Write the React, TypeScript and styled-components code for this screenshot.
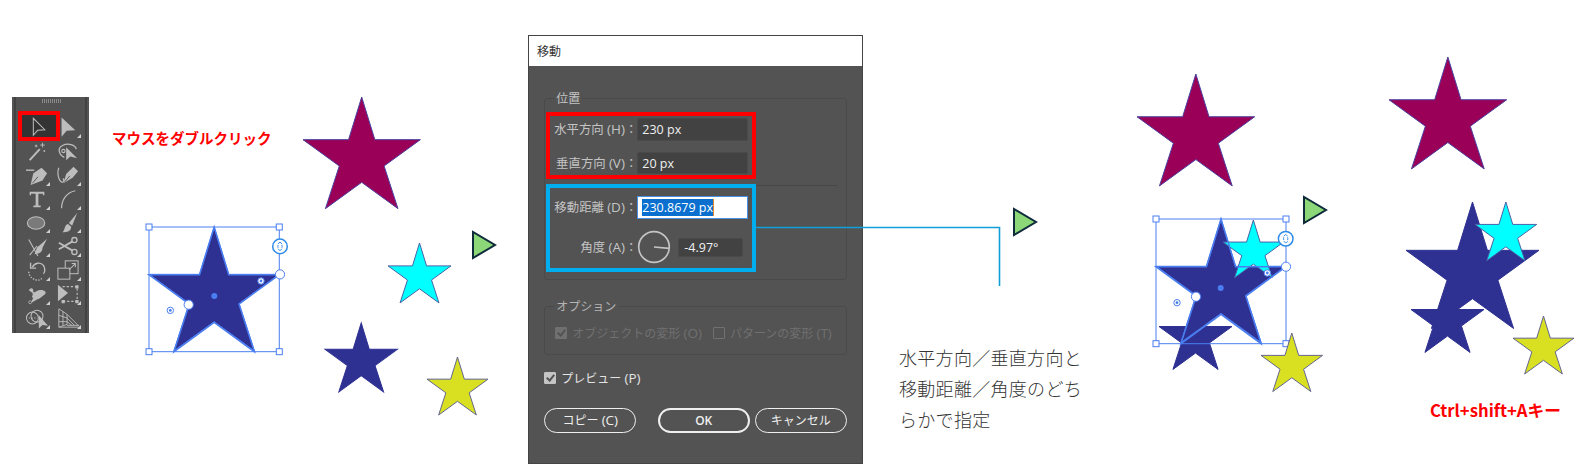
import React from "react";
import styled, { createGlobalStyle } from "styled-components";

const STAR_POINTS = [
    [50, 0], [61.2, 36.33], [100, 36.33], [69.1, 58.8], [80.9, 95.1],
    [50, 72.7], [19.1, 95.1], [30.9, 58.8], [0, 36.33], [38.8, 36.33],
];

const colors = {
    magenta: { fill: "#9b0058", line: "#4b3f9e" },
    cyan: { fill: "#00ffff", line: "#4a62a8" },
    navy: { fill: "#2e3192", line: "#2e3192" },
    yellow: { fill: "#d9e021", line: "#62658f" },
};

type StarProps = { x: number; y: number; w: number; kind: keyof typeof colors; line?: string };

const Star = ({ x, y, w, kind, line }: StarProps) => (
    <StarSvg $x={x} $y={y} $w={w} viewBox="0 0 100 95.1">
        <polygon
            points={STAR_POINTS.map((p) => p.join(",")).join(" ")}
            fill={colors[kind].fill}
            stroke={line || colors[kind].line}
            strokeWidth={1}
            vectorEffect="non-scaling-stroke"
        />
    </StarSvg>
);

const Play = ({ x, y }: { x: number; y: number }) => (
    <PlaySvg $x={x} $y={y} viewBox="0 0 26 30">
        <polygon points="2,2 2,28 24,15" fill="#8cd878" stroke="#0f2a3a" strokeWidth={2} />
    </PlaySvg>
);

type Pt = [number, number];
type SelectionProps = { x: number; y: number; w: number; h: number; left: Pt; right: Pt; rotate: Pt; center: Pt; t1: Pt; t2: Pt };

const Selection = ({ x, y, w, h, left, right, rotate, center, t1, t2 }: SelectionProps) => {
    const outline = STAR_POINTS.map(([a, b]) => `${(a / 100) * w},${(b / 95.1) * h}`).join(" ");
    const blue = "#4a7ef0";
    const corners: Pt[] = [[0, 0], [w, 0], [0, h], [w, h]];
    return (
        <SelectionSvg $x={x} $y={y} width={w} height={h} viewBox={`0 0 ${w} ${h}`}>
            <polygon points={outline} fill="none" stroke={blue} strokeWidth={1.5} />
            <rect x={0} y={0} width={w} height={h} fill="none" stroke={blue} strokeWidth={1} />
            {corners.map(([a, b], i) => (
                <rect key={i} x={a - 3} y={b - 3} width={6} height={6} fill="#fff" stroke={blue} strokeWidth={1} />
            ))}
            <circle cx={center[0]} cy={center[1]} r={3} fill={blue} />
            {[t1, t2].map(([a, b], i) => (
                <g key={i}>
                    <circle cx={a} cy={b} r={3.2} fill="#fff" stroke={blue} strokeWidth={1} />
                    <circle cx={a} cy={b} r={1.4} fill={blue} />
                </g>
            ))}
            {[left, right].map(([a, b], i) => (
                <circle key={i} cx={a} cy={b} r={4.6} fill="#fff" stroke={blue} strokeWidth={1} />
            ))}
            <g transform={`translate(${rotate[0]} ${rotate[1]})`}>
                <circle r={7.3} fill="#fff" stroke="#2f8be8" strokeWidth={1.5} />
                <path d="M-2 -2.4 L0 -4.4 L2 -2.4 M-2 2.4 L0 4.4 L2 2.4 M-1.8 -1.4 A2.6 2.6 0 0 0 -1.8 1.4 M1.8 -1.4 A2.6 2.6 0 0 1 1.8 1.4" fill="none" stroke="#2f8be8" strokeWidth={1} />
            </g>
        </SelectionSvg>
    );
};

const tools: { icon: React.ReactNode; corner: boolean; active?: boolean }[] = [
    { corner: false, active: true, icon: <path d="M8 2.5 V21 L12.6 15.6 L20.5 15 Z" fill="none" stroke="#bdbdbd" strokeWidth={1.1} /> },
    { corner: true, icon: <path d="M5 1.5 V22.5 L10.5 16 L20 15.5 Z" fill="#bdbdbd" /> },
    { corner: false, icon: <g stroke="#bdbdbd" fill="none"><path d="M4 22 L15 10" strokeWidth={2.2} /><path d="M18 3 V8 M15.5 5.5 H20.5 M11 5 V8 M9.5 6.5 H12.5 M20 11 V13 M19 12 H21" strokeWidth={1} /></g> },
    { corner: false, icon: <g fill="none" stroke="#bdbdbd"><path d="M8 19 C2 16 0 9 6 6 C12 3 20 5 21 10" strokeWidth={1.4} /><circle cx="7" cy="12" r="1.8" strokeWidth={1.2} /><path d="M10 8 V22 L14.5 18 L22 20 Z" fill="#bdbdbd" stroke="none" /></g> },
    { corner: true, icon: <g fill="#bdbdbd"><path d="M0 6 H9 V7.5 H0 Z" /><path d="M8 10 L17 4 L23 10 L18 18 L5 23 Z" /><path d="M7 21 L13 14" stroke="#535353" strokeWidth={1} /></g> },
    { corner: true, icon: <g><path d="M2 4 C-1 12 4 23 7 19 C9 16 5 15 8 18" fill="none" stroke="#bdbdbd" strokeWidth={1.3} /><path d="M10 11 L18 3 L23 8 L17 15 L7 21 Z" fill="#bdbdbd" /><path d="M8 20 L14 13" stroke="#535353" strokeWidth={1} /></g> },
    { corner: true, icon: <path d="M4 4 H20 V8 H18.5 V6.2 H13.5 V19 H16 V21 H8 V19 H10.5 V6.2 H5.5 V8 H4 Z" fill="#bdbdbd" /> },
    { corner: true, icon: <path d="M5 22 C5 13 10 5 20 3" fill="none" stroke="#bdbdbd" strokeWidth={1.3} /> },
    { corner: true, icon: <ellipse cx="11" cy="12" rx="9.5" ry="6.8" fill="#7a7a7a" stroke="#bdbdbd" strokeWidth={1.2} /> },
    { corner: true, icon: <g fill="#bdbdbd"><path d="M22 1 L13 12 L16.5 15 Z" /><path d="M12 13 C8 14 9 19 6 22 C11 22 15.5 21 15.5 16 Z" /></g> },
    { corner: true, icon: <g><path d="M3 5 L13 23 M4 22 L12 12" fill="none" stroke="#bdbdbd" strokeWidth={1.2} /><path d="M23 4 L14 12 C10 14 12 18 9 21 C14 21 18 19 18 14 Z" fill="#bdbdbd" /></g> },
    { corner: true, icon: <g fill="none" stroke="#bdbdbd" strokeWidth={1.5}><circle cx="19" cy="5.5" r="2.8" /><circle cx="19" cy="18.5" r="2.8" /><path d="M17 7 L2 15.5 M17 17 L2 8.5" strokeWidth={2} /></g> },
    { corner: true, icon: <g fill="none" stroke="#bdbdbd" strokeWidth={1.5}><path d="M7 9 C9 4 16 3 19 7 C21 10 21 14 19 16" /><path d="M5 4 V10 H11" /><path d="M3 14 C3 19 8 23 13 23 C15 23 17 22 18 20" strokeDasharray="1.5 1.5" /></g> },
    { corner: true, icon: <g fill="none" stroke="#bdbdbd" strokeWidth={1.1}><rect x="9" y="2" width="14" height="14" /><rect x="1" y="10" width="13" height="12" fill="#535353" /><path d="M13 12 L20 5 M16 5 H20 V9" /></g> },
    { corner: true, icon: <g fill="#bdbdbd"><path d="M3 8 C6 4 8 6 8 9 C8 12 11 9 14 8 C18 7 23 9 21 12 C18 14 16 17 12 18 L5 22 L8 16 C4 16 10 12 6 10 Z" /><circle cx="4.5" cy="21" r="1.6" fill="#535353" stroke="#bdbdbd" strokeWidth={0.8} /></g> },
    { corner: true, icon: <g><path d="M1 2 V20 L12 11 Z" fill="#bdbdbd" /><path d="M6 4 H22 V20 H6" fill="none" stroke="#bdbdbd" strokeWidth={1.2} strokeDasharray="2.5 2" /><path d="M20 2.5 H23.5 V6 H20 Z M20 18.5 H23.5 V22 H20 Z M5 18.5 H8.5 V22 H5 Z" fill="#bdbdbd" /></g> },
    { corner: true, icon: <g><circle cx="7" cy="12" r="6.5" fill="none" stroke="#bdbdbd" strokeWidth={1.1} /><circle cx="12" cy="10" r="6.5" fill="none" stroke="#bdbdbd" strokeWidth={1.1} /><path d="M3 12 H11" stroke="#bdbdbd" strokeWidth={1} strokeDasharray="1.5 1.5" /><path d="M14 9 V23.5 L18 19.5 L24 20.5 Z" fill="#bdbdbd" /></g> },
    { corner: true, icon: <g fill="none" stroke="#bdbdbd" strokeWidth={1}><path d="M2 2 V22 L11 19 V8 Z M2 9 L11 12 M2 16 L11 16 M6.5 5 V20" /><path d="M11 8 L24 21 M11 12 L19 20 M11 16 L16 20 M11 20 H24 M2 22 H24" /></g> },
];

export default function App() {
    return (
        <>
            <GlobalStyle/>
            <Canvas>
                <Toolbar>
                    <ToolbarInner>
                        <Grip/>
                        <ToolGrid>
                            {tools.map((t, i) => (
                                <ToolCell key={i} $active={t.active} $corner={t.corner}>
                                    <ToolIcon viewBox="0 0 24 24">{t.icon}</ToolIcon>
                                </ToolCell>
                            ))}
                        </ToolGrid>
                    </ToolbarInner>
                </Toolbar>

                <RedNote $x={112} $y={127} $size={14.5}>マウスをダブルクリック</RedNote>

                <Star x={149} y={227.3} w={130.3} kind="navy" line="#4a7ef0"/>
                <Selection x={149} y={227.3} w={130.3} h={124.7} left={[39.7, 77.7]} right={[131, 47.4]} rotate={[131, 19.4]} center={[65.3, 69]} t1={[112, 54]} t2={[21.3, 83.4]}/>
                <Star x={303.3} y={97.3} w={117.4} kind="magenta"/>
                <Star x={387.7} y={242.7} w={63} kind="cyan"/>
                <Star x={325.3} y={323.3} w={72.4} kind="navy"/>
                <Star x={427} y={356.7} w={61} kind="yellow"/>
                <Play x={470.5} y={229.5}/>

                <Dialog>
                    <TitleBar>移動</TitleBar>
                    <DialogBody>
                        <Group $top={13} $bottom={6.6}>
                            <GroupLegend>位置</GroupLegend>
                            <HighlightBox $color="#ff0000" $pad="2px 0 1px">
                                <FieldRow>
                                    <FieldLabel>水平方向 <Key>(H)</Key>：</FieldLabel>
                                    <ValueBox>230 px</ValueBox>
                                </FieldRow>
                                <FieldRow>
                                    <FieldLabel>垂直方向 <Key>(V)</Key>：</FieldLabel>
                                    <ValueBox>20 px</ValueBox>
                                </FieldRow>
                            </HighlightBox>
                            <BlueRow>
                                <HighlightBox $color="#00aeef" $pad="8px 0 3.7px">
                                    <FieldRow>
                                        <FieldLabel>移動距離 <Key>(D)</Key>：</FieldLabel>
                                        <SelectedBox><Selected>230.8679 px</Selected></SelectedBox>
                                    </FieldRow>
                                    <FieldRow>
                                        <FieldLabel>角度 <Key>(A)</Key>：</FieldLabel>
                                        <Dial viewBox="0 0 36 36">
                                            <circle cx="18" cy="18" r="16.2" fill="none" stroke="#c4c4c4" strokeWidth={1.8}/>
                                            <path d="M18 18 L34 19.4" stroke="#c4c4c4" strokeWidth={1.8}/>
                                        </Dial>
                                        <AngleBox>-4.97°</AngleBox>
                                    </FieldRow>
                                </HighlightBox>
                                <GroupDivider/>
                            </BlueRow>
                        </Group>

                        <Group $top={18} $bottom={11.6} $gapTop={26.4}>
                            <GroupLegend $dim>オプション</GroupLegend>
                            <OptionRow>
                                <CheckItem $dim>
                                    <CheckBox $on $dim/>
                                    <span>オブジェクトの変形 <Key>(O)</Key></span>
                                </CheckItem>
                                <CheckItem $dim>
                                    <CheckBox $dim/>
                                    <span>パターンの変形 <Key>(T)</Key></span>
                                </CheckItem>
                            </OptionRow>
                        </Group>

                        <PreviewRow>
                            <CheckItem>
                                <CheckBox $on/>
                                <span>プレビュー <Key>(P)</Key></span>
                            </CheckItem>
                        </PreviewRow>

                        <ButtonRow>
                            <PillButton>コピー <Key>(C)</Key></PillButton>
                            <ButtonGroup>
                                <PillButton $primary>OK</PillButton>
                                <PillButton>キャンセル</PillButton>
                            </ButtonGroup>
                        </ButtonRow>
                    </DialogBody>
                </Dialog>

                <Connector viewBox="0 0 246 62">
                    <path d="M0 1.5 H243.5 V60" fill="none" stroke="#119fd8" strokeWidth={1.6}/>
                </Connector>

                <Play x={1011.5} y={207}/>
                <Note>水平方向／垂直方向と移動距離／角度のどちらかで指定</Note>

                <Star x={1137.3} y={74} w={117.7} kind="magenta"/>
                <Star x={1159} y={300} w={73} kind="navy"/>
                <Star x={1156} y={219.3} w={130} kind="navy" line="#4a7ef0"/>
                <Star x={1223.3} y={220} w={60.7} kind="cyan"/>
                <Selection x={1156} y={219.3} w={130} h={124.7} left={[40, 77.7]} right={[130, 47.7]} rotate={[129.7, 19.7]} center={[64.7, 69]} t1={[111.3, 54]} t2={[21, 83.7]}/>
                <Star x={1260.7} y={333.3} w={61.6} kind="yellow"/>
                <Play x={1302} y={195}/>

                <Star x={1389} y={57.3} w={117.7} kind="magenta"/>
                <Star x={1411} y={282.6} w={73} kind="navy"/>
                <Star x={1406.3} y={202.3} w={133} kind="navy"/>
                <Star x={1475} y={202.3} w={61.7} kind="cyan"/>
                <Star x={1513} y={316.3} w={61} kind="yellow"/>

                <RedNote $x={1430} $y={399} $size={16.7}>Ctrl+shift+Aキー</RedNote>
            </Canvas>
        </>
    );
}

const jp = `"Noto Sans CJK JP", sans-serif`;
const ui = `"Open Sans", "Noto Sans CJK JP", sans-serif`;

const GlobalStyle = createGlobalStyle`
  html, body {
    margin: 0;
    padding: 0;
    background: #fff;
  }
`;

const Canvas = styled.div`
  position: relative;
  width: 1576px;
  height: 476px;
  overflow: hidden;
  background: #fff;
  font-family: ${jp};
`;

const StarSvg = styled.svg<{ $x: number; $y: number; $w: number }>`
  position: absolute;
  left: ${(p) => p.$x}px;
  top: ${(p) => p.$y}px;
  width: ${(p) => p.$w}px;
  height: ${(p) => (p.$w * 95.1) / 100}px;
  overflow: visible;
`;

const PlaySvg = styled.svg<{ $x: number; $y: number }>`
  position: absolute;
  left: ${(p) => p.$x}px;
  top: ${(p) => p.$y}px;
  width: 26px;
  height: 30px;
`;

const SelectionSvg = styled.svg<{ $x: number; $y: number }>`
  position: absolute;
  left: ${(p) => p.$x}px;
  top: ${(p) => p.$y}px;
  overflow: visible;
`;

const Toolbar = styled.div`
  position: absolute;
  left: 12px;
  top: 97px;
  width: 77px;
  height: 236px;
  box-sizing: border-box;
  padding: 0 2px;
  background: #535353;
`;

const ToolbarInner = styled.div`
  height: 100%;
  box-sizing: border-box;
  border-left: 2px solid #424242;
  border-right: 2px solid #424242;
  padding-left: 5px;
`;

const Grip = styled.div`
  width: 19px;
  height: 4px;
  margin: 0 0 0 21px;
  position: relative;
  top: 2px;
  background: repeating-linear-gradient(90deg, #8a8a8a 0 1px, transparent 1px 2px);
`;

const ToolGrid = styled.div`
  display: grid;
  grid-template-columns: 31.6px 31.6px;
  grid-auto-rows: 23.9px;
  margin-top: 14px;
`;

const ToolCell = styled.div<{ $active?: boolean; $corner?: boolean }>`
  position: relative;
  z-index: 0;
  display: flex;
  align-items: center;
  justify-content: center;

  &::before {
    content: "";
    display: ${(p) => (p.$active ? "block" : "none")};
    position: absolute;
    z-index: -1;
    left: -3px;
    right: -7px;
    top: -4px;
    bottom: -2px;
    box-sizing: border-box;
    background: #333;
    border: 4px solid #ff0000;
  }

  &::after {
    content: "";
    display: ${(p) => (p.$corner ? "block" : "none")};
    position: absolute;
    right: 3px;
    bottom: 1px;
    border-style: solid;
    border-width: 0 0 4px 4px;
    border-color: transparent transparent #d0d0d0 transparent;
  }
`;

const ToolIcon = styled.svg`
  width: 22px;
  height: 22px;
  overflow: visible;
`;

const RedNote = styled.div<{ $x: number; $y: number; $size: number }>`
  position: absolute;
  left: ${(p) => p.$x}px;
  top: ${(p) => p.$y}px;
  font-size: ${(p) => p.$size}px;
  line-height: 22px;
  font-weight: 700;
  color: #ff0000;
  white-space: nowrap;
`;

const Dialog = styled.div`
  position: absolute;
  left: 528px;
  top: 35px;
  width: 335px;
  height: 429px;
  box-sizing: border-box;
  display: flex;
  flex-direction: column;
  background: #535353;
  border: 1px solid #444;
  font-family: ${ui};
`;

const TitleBar = styled.div`
  height: 30px;
  flex: none;
  display: flex;
  align-items: center;
  padding-left: 8px;
  background: #fff;
  color: #333;
  font-size: 12px;
`;

const DialogBody = styled.div`
  flex: 1;
  display: flex;
  flex-direction: column;
  padding: 32.3px 15.3px 0 15.3px;
`;

const Group = styled.div<{ $top: number; $bottom: number; $gapTop?: number }>`
  position: relative;
  margin-top: ${(p) => p.$gapTop || 0}px;
  padding: ${(p) => p.$top}px 0 ${(p) => p.$bottom}px 1px;
  border: 1px solid #4a4a4a;
  border-radius: 3px;
`;

const GroupLegend = styled.div<{ $dim?: boolean }>`
  position: absolute;
  left: 9px;
  top: -9px;
  padding: 0 2px;
  background: #535353;
  color: ${(p) => (p.$dim ? "#b4b4b4" : "#c4c4c4")};
  font-size: 12px;
  line-height: 17px;
`;

const HighlightBox = styled.div<{ $color: string; $pad: string }>`
  width: 210px;
  box-sizing: border-box;
  border: 4px solid ${(p) => p.$color};
  padding: ${(p) => p.$pad};
  display: flex;
  flex-direction: column;
  gap: 11px;
`;

const BlueRow = styled.div`
  display: flex;
  align-items: flex-start;
  margin-top: 5px;
`;

const GroupDivider = styled.div`
  width: 81px;
  height: 1px;
  margin-top: 1px;
  background: #474747;
`;

const FieldRow = styled.div`
  display: flex;
  align-items: center;
`;

const FieldLabel = styled.div`
  width: 87px;
  flex: none;
  box-sizing: border-box;
  text-align: right;
  color: #c4c4c4;
  font-size: 12.4px;
  line-height: 18px;
  white-space: nowrap;
`;

const Key = styled.span`
  font-size: 13.5px;
`;

const ValueBox = styled.div`
  width: 110.5px;
  height: 22.5px;
  box-sizing: border-box;
  display: flex;
  align-items: center;
  padding-left: 4px;
  background: #424242;
  border: 1px solid #4a4a4a;
  border-radius: 2px;
  color: #f0f0f0;
  font-size: 12.5px;
`;

const SelectedBox = styled(ValueBox)`
  height: 23px;
  background: #fff;
  border-color: #4a90e0;
  border-radius: 0;
`;

const Selected = styled.span`
  background: #0a6fce;
  color: #fff;
  line-height: 17px;
  border-right: 1px solid #e88a30;
`;

const Dial = styled.svg`
  width: 34px;
  height: 34px;
  flex: none;
`;

const AngleBox = styled(ValueBox)`
  width: 65px;
  height: 19.5px;
  margin-left: 7px;
  padding-left: 5px;
`;

const OptionRow = styled.div`
  display: flex;
  gap: 11px;
  padding-left: 9px;
`;

const CheckItem = styled.div<{ $dim?: boolean }>`
  display: flex;
  align-items: center;
  gap: 5px;
  color: ${(p) => (p.$dim ? "#707070" : "#e4e4e4")};
  font-size: 12px;
  line-height: 17px;
  white-space: nowrap;
`;

const CheckBox = styled.span<{ $on?: boolean; $dim?: boolean }>`
  position: relative;
  width: 12px;
  height: 12px;
  flex: none;
  box-sizing: border-box;
  border-radius: 1px;
  border: 1px solid ${(p) => (p.$dim ? "#707070" : "#c4c4c4")};
  background: ${(p) => (!p.$on ? "transparent" : p.$dim ? "#707070" : "#c4c4c4")};

  &::after {
    content: "";
    display: ${(p) => (p.$on ? "block" : "none")};
    position: absolute;
    left: 3px;
    top: 0;
    width: 3px;
    height: 6px;
    border: solid #535353;
    border-width: 0 2px 2px 0;
    transform: rotate(40deg);
  }
`;

const PreviewRow = styled.div`
  display: flex;
  margin-top: 15px;
`;

const ButtonRow = styled.div`
  display: flex;
  justify-content: space-between;
  margin-top: 21.1px;
`;

const ButtonGroup = styled.div`
  display: flex;
  gap: 5px;
`;

const PillButton = styled.button<{ $primary?: boolean }>`
  width: 92px;
  height: 25.5px;
  padding: 0;
  box-sizing: border-box;
  background: transparent;
  border: ${(p) => (p.$primary ? "2px" : "1px")} solid #efefef;
  border-radius: 13px;
  color: #efefef;
  font-family: ${ui};
  font-size: 12px;
  font-weight: ${(p) => (p.$primary ? 600 : 400)};
`;

const Connector = styled.svg`
  position: absolute;
  left: 756px;
  top: 226px;
  width: 246px;
  height: 62px;
`;

const Note = styled.div`
  position: absolute;
  left: 899px;
  top: 342px;
  width: 186px;
  color: #333;
  font-size: 18px;
  font-weight: 300;
  line-height: 30.8px;
  letter-spacing: 0.3px;
`;
